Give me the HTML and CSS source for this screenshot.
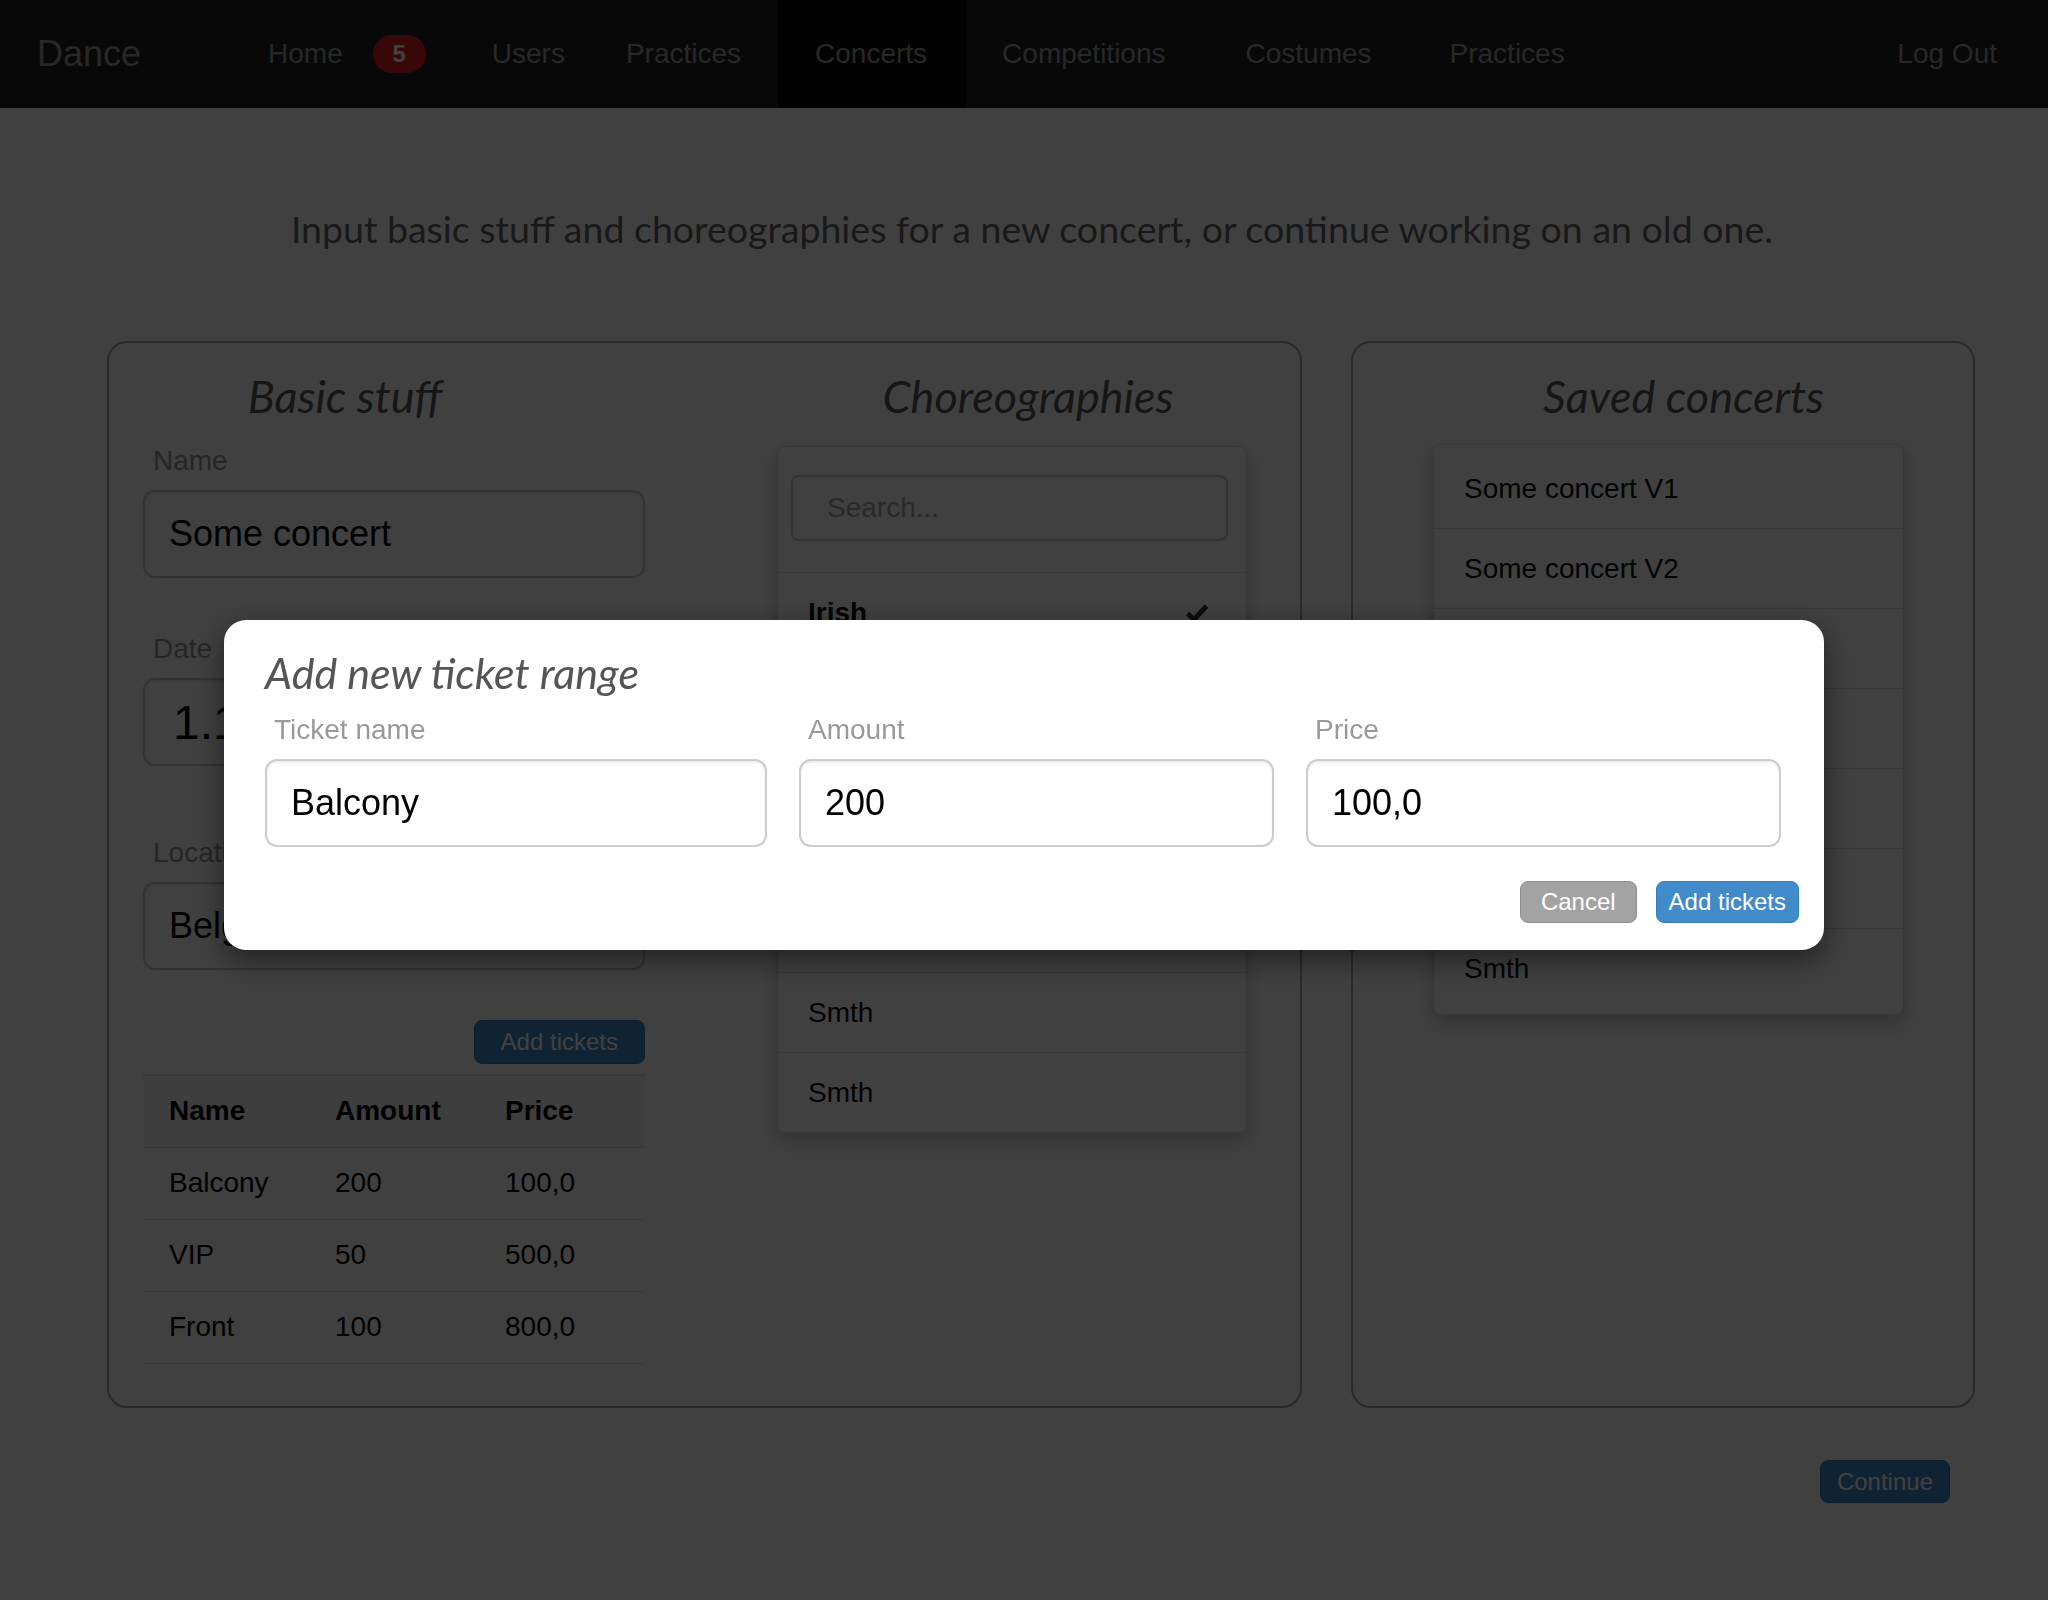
FILE: index.html
```html
<!DOCTYPE html>
<html lang="en">
<head>
<meta charset="utf-8">
<title>Dance - Concerts</title>
<link rel="stylesheet" href="styles.css">
</head>
<body>
<nav class="navbar">
  <a class="brand">Dance</a>
  <ul class="nav">
    <li class="nav-home"><a>Home<span class="badge">5</span></a></li>
    <li class="nav-users"><a>Users</a></li>
    <li class="nav-practices"><a>Practices</a></li>
    <li class="nav-concerts active"><a>Concerts</a></li>
    <li class="nav-competitions"><a>Competitions</a></li>
    <li class="nav-costumes"><a>Costumes</a></li>
    <li class="nav-practices2"><a>Practices</a></li>
  </ul>
  <ul class="nav nav-right">
    <li><a>Log Out</a></li>
  </ul>
</nav>

<main class="page">
  <p class="lead">Input basic stuff and choreographies for a new concert, or continue working on an old one.</p>

  <div class="panels">
    <section class="panel panel-main">
      <div class="col-basic">
        <h3 class="panel-title title-basic">Basic stuff</h3>
        <div class="form-group fg-name">
          <label class="field-label">Name</label>
          <input class="form-control" type="text" value="Some concert">
        </div>
        <div class="form-group fg-date">
          <label class="field-label">Date</label>
          <input class="form-control date-control" type="text" value="1.1.2017">
        </div>
        <div class="form-group fg-location">
          <label class="field-label">Location</label>
          <input class="form-control" type="text" value="Belgrade">
        </div>
        <div class="btn-row">
          <button class="btn btn-primary btn-wide">Add tickets</button>
        </div>
        <table class="tickets">
          <thead>
            <tr><th class="c-name">Name</th><th class="c-amount">Amount</th><th>Price</th></tr>
          </thead>
          <tbody>
            <tr><td>Balcony</td><td>200</td><td>100,0</td></tr>
            <tr><td>VIP</td><td>50</td><td>500,0</td></tr>
            <tr><td>Front</td><td>100</td><td>800,0</td></tr>
          </tbody>
        </table>
      </div>

      <div class="col-choreo">
        <h3 class="panel-title title-choreo">Choreographies</h3>
        <div class="list choreo-list">
          <div class="list-head">
            <input class="search-control" type="text" placeholder="Search...">
          </div>
          <div class="list-item selected">
            <span>Irish</span>
            <svg class="check" width="24" height="20" viewBox="0 0 24 20"><path d="M2.5 10.5 L9 16.5 L21.5 3" fill="none" stroke="#333" stroke-width="5"/></svg>
          </div>
          <div class="list-item"><span>Ballet</span></div>
          <div class="list-item"><span>Flamenco</span></div>
          <div class="list-item"><span>Salsa</span></div>
          <div class="list-item"><span>Tango</span></div>
          <div class="list-item"><span>Smth</span></div>
          <div class="list-item"><span>Smth</span></div>
        </div>
      </div>
    </section>

    <section class="panel panel-saved">
      <h3 class="panel-title title-saved">Saved concerts</h3>
      <div class="list saved-list">
        <div class="saved-item">Some concert V1</div>
        <div class="saved-item">Some concert V2</div>
        <div class="saved-item">Some concert V3</div>
        <div class="saved-item">Winter show</div>
        <div class="saved-item">Spring show</div>
        <div class="saved-item">Summer show</div>
        <div class="saved-item">Smth</div>
      </div>
    </section>
  </div>

  <div class="continue-row">
    <button class="btn btn-primary btn-continue">Continue</button>
  </div>
</main>

<div class="backdrop">
  <div class="modal">
    <h3 class="modal-title">Add new ticket range</h3>
    <div class="modal-grid">
      <div class="modal-field">
        <label class="field-label">Ticket name</label>
        <input class="form-control" type="text" value="Balcony">
      </div>
      <div class="modal-field">
        <label class="field-label">Amount</label>
        <input class="form-control" type="text" value="200">
      </div>
      <div class="modal-field">
        <label class="field-label">Price</label>
        <input class="form-control" type="text" value="100,0">
      </div>
    </div>
    <div class="modal-footer">
      <button class="btn btn-default">Cancel</button>
      <button class="btn btn-primary btn-narrow">Add tickets</button>
    </div>
  </div>
</div>
</body>
</html>
```

FILE: styles.css
```css
* { box-sizing: border-box; }

html, body { margin: 0; padding: 0; }

body {
  width: 2048px;
  min-height: 1600px;
  background: #ffffff;
  color: #222;
  font-family: "Liberation Sans", Arial, sans-serif;
}

/* ---------- navbar ---------- */
.navbar {
  display: flex;
  align-items: stretch;
  height: 108px;
  background: #222222;
  padding: 0 14px 0 37px;
}

.brand {
  display: flex;
  align-items: center;
  font-size: 36px;
  color: #9d9d9d;
  text-decoration: none;
}

.nav {
  display: flex;
  list-style: none;
  margin: 0 0 0 90px;
  padding: 0;
}

.nav li { display: flex; }

.nav a {
  display: flex;
  align-items: center;
  padding: 0 37px;
  font-size: 28px;
  color: #9d9d9d;
}

.nav .nav-home a { padding-right: 30px; }
.nav .nav-users a { padding-left: 36px; padding-right: 25px; }
.nav .nav-practices a { padding-left: 36px; }
.nav .nav-concerts a { padding-right: 40px; }
.nav .nav-competitions a { padding-left: 35px; padding-right: 40px; }
.nav .nav-costumes a { padding-left: 40px; padding-right: 39px; }
.nav .nav-practices2 a { padding-left: 39px; }

.nav .active a { background: #080808; }

.nav-right { margin-left: auto; }

.badge {
  display: inline-flex;
  align-items: center;
  justify-content: center;
  min-width: 53px;
  height: 38px;
  margin-left: 30px;
  border-radius: 19px;
  background: #e01f1f;
  color: #fff;
  font-size: 24px;
  font-weight: bold;
}

/* ---------- page ---------- */
.page { padding: 0 73px 0 107px; }

.lead {
  margin: 99px 0 0;
  padding-right: 18px;
  text-align: center;
  font-family: Lato, "Open Sans", sans-serif;
  font-size: 37.5px;
  line-height: 43px;
  color: #666;
}

.panels {
  display: flex;
  gap: 49px;
  margin-top: 91px;
}

.panel {
  border: 2px solid #a8a8a8;
  border-radius: 20px;
  background: #fff;
}

.panel-main {
  flex: 0 0 1195px;
  display: grid;
  grid-template-columns: 502px 470px;
  column-gap: 132px;
  align-items: start;
  padding: 24px 53px 42px 34px;
}

.panel-saved {
  flex: 1;
  padding: 24px 69px 0 80px;
}

.panel-title {
  margin: 0;
  font-family: Lato, "Open Sans", sans-serif;
  font-style: italic;
  font-weight: normal;
  font-size: 45px;
  line-height: 58px;
  color: #5a5a5a;
  text-align: center;
}

.title-basic { padding-right: 98px; }
.title-choreo { padding-left: 32px; }
.title-saved { padding-left: 30px; }

/* ---------- forms ---------- */
.field-label {
  display: block;
  font-size: 28px;
  line-height: 40px;
  color: #999;
  margin-bottom: 9px;
}

.form-group .field-label { padding-left: 10px; }

.fg-name { margin-top: 16px; }
.fg-date { margin-top: 51px; }
.fg-location { margin-top: 67px; }

.form-control {
  display: block;
  width: 100%;
  height: 88px;
  margin: 0;
  padding: 0 24px;
  border: 2px solid #cccccc;
  border-radius: 12px;
  background: #fff;
  box-shadow: inset 0 2px 2px rgba(0, 0, 0, 0.075);
  font-family: "Liberation Sans", Arial, sans-serif;
  font-size: 36px;
  color: #000;
}

.date-control { font-size: 48px; padding-left: 28px; }

.btn-row {
  display: flex;
  justify-content: flex-end;
  margin-top: 50px;
}

.btn {
  margin: 0;
  border: 1px solid transparent;
  border-radius: 8px;
  font-family: "Liberation Sans", Arial, sans-serif;
  font-size: 24px;
  color: #fff;
}

.btn-primary { background: #428bca; border-color: #357ebd; }
.btn-default { background: #a3a3a3; border-color: #8d8d8d; padding: 3px 20px; line-height: 34px; }

.btn-wide { padding: 3px 26px; line-height: 36px; }
.btn-narrow { padding: 3px 12px; line-height: 34px; }
.btn-continue { padding: 3px 16px; line-height: 35px; }

/* ---------- table ---------- */
.tickets {
  width: 100%;
  margin-top: 10px;
  border-collapse: collapse;
  font-size: 28px;
  line-height: 40px;
  color: #000;
}

.tickets th {
  text-align: left;
  font-weight: bold;
  padding: 15px 26px 16px;
  border-top: 2px solid #e2e2e2;
  background: #f7f7f7;
}

.tickets td {
  padding: 15px 26px 16px;
  border-top: 1px solid #dddddd;
}

.tickets tbody tr:last-child td { border-bottom: 1px solid #dddddd; }

.c-name { width: 166px; }
.c-amount { width: 170px; }

/* ---------- lists ---------- */
.list {
  background: #fff;
  border: 1px solid #dddddd;
  border-radius: 8px;
  box-shadow: 0 8px 18px rgba(0, 0, 0, 0.22);
  font-size: 28px;
  line-height: 40px;
  color: #111;
}

.choreo-list { margin-top: 21px; }

.list-head { padding: 28px 18px 31px 13px; }

.search-control {
  display: block;
  width: 100%;
  height: 66px;
  margin: 0;
  padding: 0 34px;
  border: 2px solid #cccccc;
  border-radius: 8px;
  font-family: "Liberation Sans", Arial, sans-serif;
  font-size: 28px;
  color: #333;
}

.search-control::placeholder { color: #a8a8a8; }

.list-item {
  display: flex;
  align-items: center;
  justify-content: space-between;
  padding: 20px 30px 19px;
  border-top: 1px solid #dddddd;
}

.list-item.selected { font-weight: bold; }

.check { margin-right: 7px; }

.saved-list { margin-top: 19px; }

.saved-item {
  padding: 20px 30px 19px;
  border-top: 1px solid #dddddd;
}

.saved-item:first-child { border-top: 0; padding-top: 24px; }
.saved-item:last-child { padding-bottom: 25px; }

/* ---------- continue ---------- */
.continue-row {
  display: flex;
  justify-content: flex-end;
  margin-top: 52px;
  padding-right: 25px;
}

/* ---------- modal ---------- */
.backdrop {
  position: fixed;
  top: 0;
  right: 0;
  bottom: 0;
  left: 0;
  background: rgba(0, 0, 0, 0.75);
  display: flex;
  justify-content: center;
  align-items: flex-start;
  padding-top: 620px;
}

.modal {
  width: 1600px;
  background: #fff;
  border-radius: 22px;
  padding: 29px 43px 27px 41px;
  box-shadow: 0 10px 30px rgba(0, 0, 0, 0.5);
}

.modal-title {
  margin: 0;
  font-family: Lato, "Open Sans", sans-serif;
  font-style: italic;
  font-weight: normal;
  font-size: 43px;
  line-height: 48px;
  color: #555;
}

.modal-grid {
  display: grid;
  grid-template-columns: 502px 475px 1fr;
  column-gap: 32px;
  margin-top: 13px;
}

.modal-field .field-label { padding-left: 9px; }

.modal-footer {
  display: flex;
  justify-content: flex-end;
  gap: 19px;
  margin-top: 34px;
  margin-right: -18px;
}
```
